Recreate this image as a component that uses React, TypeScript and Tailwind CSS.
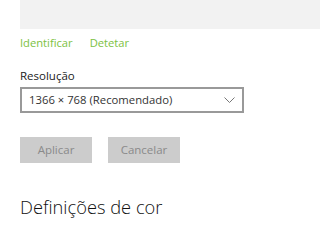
export default function App() {
  return (
    <div className="h-[228px] w-[320px] overflow-hidden bg-white font-['Open_Sans',sans-serif]">
      <div className="ml-5 h-[29px] bg-[#f2f2f2]"></div>

      <div className="ml-5 mt-[6px] flex gap-[17px] text-[11.2px] leading-[16px] text-[#7cc142]">
        <span>Identificar</span>
        <span>Detetar</span>
      </div>

      <div className="ml-5 mt-[17px] text-[11.5px] leading-[16px] text-[#222]">Resolução</div>

      <div className="ml-5 mt-[3px] flex h-[26px] w-[224px] items-center justify-between border-2 border-[#999] pl-[7px] pr-[7px] text-[11.3px] text-[#333]">
        <span>1366 × 768 (Recomendado)</span>
        <svg width="11" height="6" viewBox="0 0 11 6" fill="none" stroke="#777" strokeWidth="1">
          <path d="M0.5 0.5 L5.5 5.5 L10.5 0.5" />
        </svg>
      </div>

      <div className="ml-5 mt-[24px] flex gap-[16px]">
        <button className="h-[26px] w-[72px] bg-[#cccccc] text-[11.5px] text-[#8a8a8a]">Aplicar</button>
        <button className="h-[26px] w-[72px] bg-[#cccccc] text-[11.5px] text-[#8a8a8a]">Cancelar</button>
      </div>

      <div className="ml-5 mt-[32px] text-[18.3px] font-light leading-[24px] text-[#111]">Definições de cor</div>
    </div>
  )
}
